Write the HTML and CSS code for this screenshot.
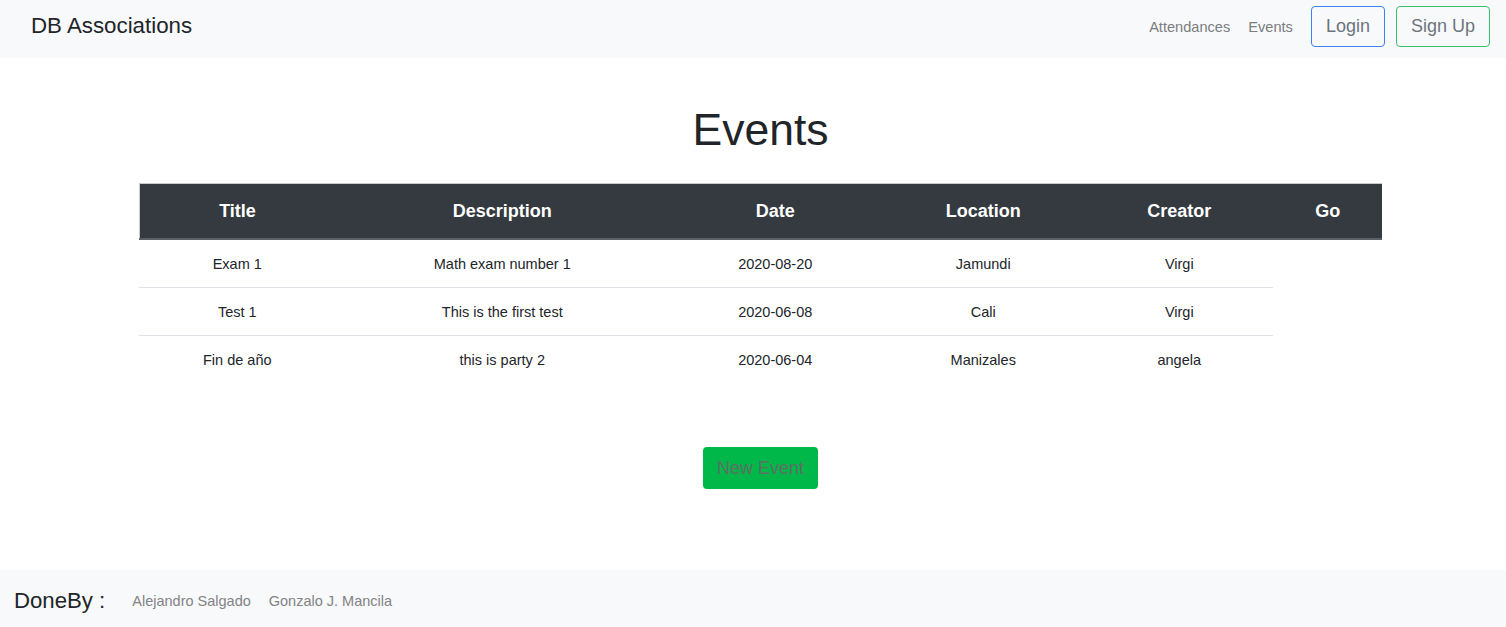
FILE: index.html
```html
<!DOCTYPE html>
<html lang="en">
<head>
<meta charset="utf-8">
<title>DB Associations</title>
<link rel="stylesheet" href="styles.css">
</head>
<body>
<nav class="navbar">
  <a class="brand" href="#">DB Associations</a>
  <div class="nav-right">
    <a class="nav-link" href="#">Attendances</a>
    <a class="nav-link" href="#">Events</a>
    <a class="btn btn-login" href="#">Login</a>
    <a class="btn btn-signup" href="#">Sign Up</a>
  </div>
</nav>
<main class="main">
  <h1 class="title">Events</h1>
  <table class="events">
    <colgroup>
      <col class="c-title"><col class="c-desc"><col class="c-date"><col class="c-loc"><col class="c-creator"><col class="c-go">
    </colgroup>
    <thead>
      <tr><th>Title</th><th>Description</th><th>Date</th><th>Location</th><th>Creator</th><th>Go</th></tr>
    </thead>
    <tbody>
      <tr><td>Exam 1</td><td>Math exam number 1</td><td>2020-08-20</td><td>Jamundi</td><td>Virgi</td></tr>
      <tr><td>Test 1</td><td>This is the first test</td><td>2020-06-08</td><td>Cali</td><td>Virgi</td></tr>
      <tr><td>Fin de año</td><td>this is party 2</td><td>2020-06-04</td><td>Manizales</td><td>angela</td></tr>
    </tbody>
  </table>
  <div class="actions">
    <a class="btn-new" href="#">New Event</a>
  </div>
</main>
<footer class="footer">
  <span class="done">DoneBy :</span>
  <a class="foot-link" href="#">Alejandro Salgado</a>
  <a class="foot-link" href="#">Gonzalo J. Mancila</a>
</footer>
</body>
</html>
```

FILE: styles.css
```css
* { box-sizing: border-box; }
html, body { margin: 0; padding: 0; }
body {
  font-family: "Liberation Sans", Arial, sans-serif;
  color: #212529;
  background: #fff;
  min-height: 100vh;
  display: flex;
  flex-direction: column;
}
a { text-decoration: none; }

.navbar {
  height: 58px;
  background: #f8f9fa;
  display: flex;
  align-items: center;
  justify-content: space-between;
  padding: 0 16px 5px 31px;
}
.brand {
  font-size: 22.3px;
  color: #212529;
  line-height: 1;
}
.nav-right {
  display: flex;
  align-items: center;
}
.nav-link {
  font-size: 14.6px;
  color: #7b7d7f;
  margin-right: 18px;
}
.btn {
  display: inline-block;
  font-size: 18px;
  line-height: 27px;
  padding: 6px 14px;
  border-radius: 4px;
  color: #6c757d;
  background: transparent;
}
.btn-login { border: 1px solid #3b82f6; margin-right: 11px; }
.btn-signup { border: 1px solid #3cc26a; }

.main {
  flex: 1;
  display: flex;
  flex-direction: column;
  align-items: center;
  padding-left: 15px;
}
.title {
  font-size: 44.5px;
  font-weight: 400;
  line-height: 52px;
  margin: 46px 0 27px;
  color: #212529;
}
.events {
  width: 1243px;
  border-collapse: collapse;
  table-layout: fixed;
  font-size: 14.5px;
}
.c-title { width: 196px; }
.c-desc { width: 334px; }
.c-date { width: 212px; }
.c-loc { width: 204px; }
.c-creator { width: 188px; }
.c-go { width: 109px; }
.events th {
  background: #343a40;
  color: #fff;
  font-size: 18px;
  font-weight: 700;
  line-height: 27px;
  padding: 14px 8px 13px;
  border-top: 1px solid #c8cacc;
  border-bottom: 2px solid #5a6169;
  text-align: center;
}
.events th:first-child { border-left: 1px solid #c8cacc; }
.events td {
  text-align: center;
  padding: 2px 8px 0;
  height: 48px;
  line-height: 20px;
  border-top: 1px solid #dee2e6;
  color: #212529;
}
.events tbody tr:first-child td { border-top: none; }
.actions {
  margin-top: 64px;
}
.btn-new {
  display: inline-block;
  background: #00b74a;
  color: #5d7163;
  font-size: 18px;
  line-height: 28px;
  padding: 7px 14px;
  border-radius: 4px;
}
.footer {
  height: 57px;
  background: #f8f9fa;
  display: flex;
  align-items: center;
  padding: 4px 14px 0;
}
.done {
  font-size: 22.2px;
  color: #212529;
  margin-right: 27px;
}
.foot-link {
  font-size: 14.5px;
  color: #828385;
  margin-right: 18px;
}
```
